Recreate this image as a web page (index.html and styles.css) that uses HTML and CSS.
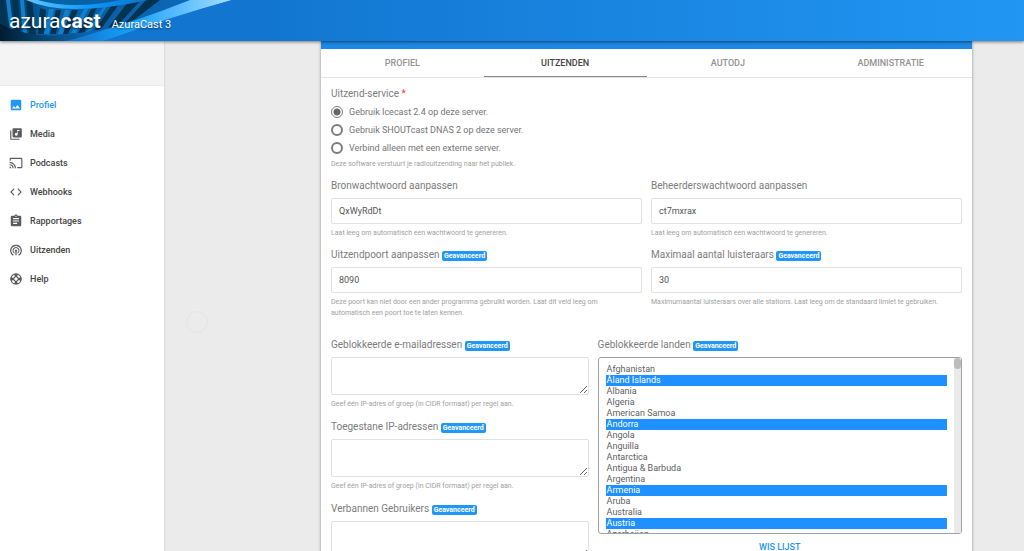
FILE: index.html
```html
<!DOCTYPE html>
<html lang="nl">
<head>
<meta charset="utf-8">
<title>AzuraCast 3</title>
<link rel="stylesheet" href="styles.css">
</head>
<body>
<header class="topbar">
  <svg class="topbar-art" viewBox="0 0 280 41" aria-hidden="true">
    <defs>
      <linearGradient id="base" x1="0" x2="1"><stop offset="0" stop-color="#04304f"/><stop offset=".2" stop-color="#0464a4"/><stop offset=".5" stop-color="#0a5fa6"/><stop offset="1" stop-color="#0f6fc8"/></linearGradient>
      <linearGradient id="low" x1="0" x2="1"><stop offset="0" stop-color="#021c30"/><stop offset=".4" stop-color="#04487a"/><stop offset="1" stop-color="#1276d0"/></linearGradient>
      <linearGradient id="beam" x1="0" x2="1"><stop offset="0" stop-color="#0d6fc4"/><stop offset=".4" stop-color="#18a0fb"/><stop offset="1" stop-color="#a4dcff"/></linearGradient>
      <linearGradient id="ring" x1="0" x2="1"><stop offset="0" stop-color="#63c4ff"/><stop offset=".5" stop-color="#0d9bfb"/><stop offset="1" stop-color="#0a70c4"/></linearGradient>
    </defs>
    <path d="M0 0H232L104 41H0z" fill="url(#base)"/>
    <path d="M0 0H3L8 33H0zM12 0h6l3 35-6-1zM26 0h6l4 35-7 0zM40 8l6 2-2 24-6 0zM56 10l5 0-5 24-6 0zM72 10l6 0-10 24-6 0zM92 8l6-2-14 27-6 0zM112 5l8-2-19 26-7 2zM128 2l12-1-22 24-10 3zM146 0h14l-26 20-9 3z" fill="#033353"/>
    <path d="M6 0h4l4 33-4 0zM20 0h4l3 35-4 0zM49 9h5l-5 25-5 0zM65 10l5 0-7 24-5 0zM84 9l5-1-13 25-5 0zM104 6l4-1-17 26-5 1z" fill="#107fce"/>
    <path d="M0 24Q30 38 60 35T116 27L104 41H0z" fill="url(#low)"/>
    <path d="M26 0Q46 9 76 9T148 0H120Q98 5 76 5T38 0z" fill="url(#ring)"/>
    <path d="M88 35Q140 20 190 0H232Q170 18 104 41H64Q76 39 88 35z" fill="url(#beam)"/>
    <path d="M104 41Q170 17 232 0H280V41z" fill="#1276d0"/>
  </svg>
  <a class="brand" href="#"><span class="logo">azura<strong>cast</strong></span><span class="instance">AzuraCast 3</span></a>
</header>
<div class="layout">
  <aside class="sidebar">
    <div class="sidebar-head"></div>
    <nav class="nav">
      <a class="nav-link active" href="#"><svg viewBox="0 0 24 24"><path d="M21 19V5a2 2 0 0 0-2-2H5a2 2 0 0 0-2 2v14c0 1.100.9 2 2 2h14a2 2 0 0 0 2-2zM8.500 13.500l2.500 3.010L14.500 12l4.500 6H5l3.500-4.500z"/></svg>Profiel</a>
      <a class="nav-link" href="#"><svg viewBox="0 0 24 24"><path d="M20 2H8a2 2 0 0 0-2 2v12c0 1.100.9 2 2 2h12a2 2 0 0 0 2-2V4a2 2 0 0 0-2-2zm-2 5h-3v5.500a2.500 2.500 0 1 1-1-2V5h4v2zM4 6H2v14c0 1.100.9 2 2 2h14v-2H4V6z"/></svg>Media</a>
      <a class="nav-link" href="#"><svg viewBox="0 0 24 24"><path d="M21 3H3a2 2 0 0 0-2 2v3h2V5h18v14h-7v2h7a2 2 0 0 0 2-2V5a2 2 0 0 0-2-2zM1 18v3h3a3 3 0 0 0-3-3zm0-4v2a5 5 0 0 1 5 5h2a7 7 0 0 0-7-7zm0-4v2a9 9 0 0 1 9 9h2A11 11 0 0 0 1 10z"/></svg>Podcasts</a>
      <a class="nav-link" href="#"><svg viewBox="0 0 24 24"><path d="M9.400 16.600L4.800 12l4.600-4.600L8 6l-6 6 6 6 1.400-1.400zm5.200 0l4.600-4.600-4.600-4.600L16 6l6 6-6 6-1.400-1.400z"/></svg>Webhooks</a>
      <a class="nav-link" href="#"><svg viewBox="0 0 24 24"><path d="M19 3h-4.180a3 3 0 0 0-5.640 0H5a2 2 0 0 0-2 2v14c0 1.100.9 2 2 2h14a2 2 0 0 0 2-2V5a2 2 0 0 0-2-2zm-7 0a1 1 0 1 1 0 2 1 1 0 0 1 0-2zm2 14H7v-2h7v2zm3-4H7v-2h10v2zm0-4H7V7h10v2z"/></svg>Rapportages</a>
      <a class="nav-link" href="#"><svg viewBox="0 0 24 24"><path d="M12 11a2 2 0 0 0-1 3.700V21h2v-6.300A2 2 0 0 0 12 11zm6 2a6 6 0 1 0-9 5.200l1-1.700a4 4 0 1 1 4 0l1 1.700a6 6 0 0 0 3-5.200zM12 3A10 10 0 0 0 7 21.700l1-1.800a8 8 0 1 1 8 0l1 1.800A10 10 0 0 0 12 3z"/></svg>Uitzenden</a>
      <a class="nav-link" href="#"><svg viewBox="0 0 24 24"><path fill-rule="evenodd" d="M12 2a10 10 0 1 0 0 20 10 10 0 0 0 0-20zm7.460 7.120l-2.780 1.150a5 5 0 0 0-2.950-2.940l1.150-2.780a8 8 0 0 1 4.580 4.570zM12 15a3 3 0 1 1 0-6 3 3 0 0 1 0 6zM9.130 4.540l1.170 2.780a5 5 0 0 0-2.980 2.970L4.540 9.130a8 8 0 0 1 4.590-4.590zM4.540 14.870l2.780-1.150a5 5 0 0 0 2.970 2.960l-1.170 2.780a8 8 0 0 1-4.580-4.590zm10.340 4.590l-1.150-2.780a5 5 0 0 0 2.950-2.970l2.780 1.170a8 8 0 0 1-4.580 4.580z"/></svg>Help</a>
    </nav>
  </aside>
  <main class="main">
    <div class="ripple"></div>
    <section class="card">
      <div class="card-head"></div>
      <nav class="tabs">
        <a class="tab" href="#">PROFIEL</a><a class="tab current" href="#">UITZENDEN</a><a class="tab" href="#">AUTODJ</a><a class="tab" href="#">ADMINISTRATIE</a>
      </nav>
      <form class="form">
        <fieldset class="service">
          <legend class="label">Uitzend-service <span class="required">*</span></legend>
          <label class="choice"><input type="radio" name="service" checked>Gebruik Icecast 2.4 op deze server.</label>
          <label class="choice"><input type="radio" name="service">Gebruik SHOUTcast DNAS 2 op deze server.</label>
          <label class="choice"><input type="radio" name="service">Verbind alleen met een externe server.</label>
          <p class="help">Deze software verstuurt je radiouitzending naar het publiek.</p>
        </fieldset>
        <div class="halves">
          <div class="field">
            <label class="label" for="source">Bronwachtwoord aanpassen</label>
            <input class="control" id="source" type="text" value="QxWyRdDt">
            <p class="help">Laat leeg om automatisch een wachtwoord te genereren.</p>
          </div>
          <div class="field">
            <label class="label" for="admin">Beheerderswachtwoord aanpassen</label>
            <input class="control" id="admin" type="text" value="ct7mxrax">
            <p class="help">Laat leeg om automatisch een wachtwoord te genereren.</p>
          </div>
          <div class="field">
            <label class="label" for="port">Uitzendpoort aanpassen <span class="badge">Geavanceerd</span></label>
            <input class="control" id="port" type="text" value="8090">
            <p class="help">Deze poort kan niet door een ander programma gebruikt worden. Laat dit veld leeg om automatisch een poort toe te laten kennen.</p>
          </div>
          <div class="field">
            <label class="label" for="max">Maximaal aantal luisteraars <span class="badge">Geavanceerd</span></label>
            <input class="control" id="max" type="text" value="30">
            <p class="help">Maximumaantal luisteraars over alle stations. Laat leeg om de standaard limiet te gebruiken.</p>
          </div>
        </div>
        <div class="blocking">
          <div class="stack">
            <div class="field">
              <label class="label" for="mails">Geblokkeerde e-mailadressen <span class="badge">Geavanceerd</span></label>
              <textarea class="control area" id="mails"></textarea>
              <p class="help">Geef één IP-adres of groep (in CIDR formaat) per regel aan.</p>
            </div>
            <div class="field">
              <label class="label" for="ips">Toegestane IP-adressen <span class="badge">Geavanceerd</span></label>
              <textarea class="control area" id="ips"></textarea>
              <p class="help">Geef één IP-adres of groep (in CIDR formaat) per regel aan.</p>
            </div>
            <div class="field">
              <label class="label" for="agents">Verbannen Gebruikers <span class="badge">Geavanceerd</span></label>
              <textarea class="control area" id="agents"></textarea>
            </div>
          </div>
          <div class="countries">
            <label class="label" for="lands">Geblokkeerde landen <span class="badge">Geavanceerd</span></label>
            <div class="list-box">
              <select class="list" id="lands" multiple>
                <option>Afghanistan</option><option selected>Åland Islands</option><option>Albania</option><option>Algeria</option><option>American Samoa</option><option selected>Andorra</option><option>Angola</option><option>Anguilla</option><option>Antarctica</option><option>Antigua &amp; Barbuda</option><option>Argentina</option><option selected>Armenia</option><option>Aruba</option><option>Australia</option><option selected>Austria</option><option>Azerbaijan</option><option>Bahamas</option><option>Bahrain</option><option>Bangladesh</option><option>Barbados</option>
              </select>
              <span class="scroll-track"><span class="scroll-thumb"></span></span>
            </div>
            <button class="clear" type="button">WIS LIJST</button>
          </div>
        </div>
      </form>
    </section>
  </main>
</div>
</body>
</html>
```
FILE: styles.css
```css
* { box-sizing: border-box; }
html, body { height: 100%; }
body {
  margin: 0;
  display: flex;
  flex-direction: column;
  overflow: hidden;
  background: #ebebeb;
  color: #747474;
  font: 9px/12px Roboto, sans-serif;
}
a { color: inherit; text-decoration: none; }

.topbar {
  position: relative;
  z-index: 2;
  flex: none;
  height: 41px;
  background: linear-gradient(90deg, #1276d0 25%, #2196f3);
  box-shadow: 0 1px 3px rgba(0, 0, 0, .5);
}
.topbar-art { position: absolute; left: 0; top: 0; height: 100%; }
.brand {
  position: relative;
  display: flex;
  align-items: baseline;
  gap: 11px;
  padding: 11px 9px;
  color: #fff;
  text-shadow: 0 1px 2px rgba(0, 0, 0, .5);
}
.logo { font-size: 21px; line-height: 20px; }
.logo strong { font-weight: 700; }
.instance { font-size: 11px; }

.layout { flex: 1; min-height: 0; display: flex; }
.sidebar {
  flex: none;
  width: 164px;
  background: #fff;
  box-shadow: 0 0 2px rgba(0, 0, 0, .2);
}
.sidebar-head { height: 45px; background: #f4f4f4; border-bottom: 1px solid #ebebeb; }
.nav { padding-top: 4px; }
.nav-link {
  display: flex;
  align-items: center;
  gap: 7px;
  height: 29px;
  padding-left: 9px;
  color: #444;
  font-weight: 500;
}
.nav-link svg { width: 14px; height: 14px; fill: #5b5b5b; }
.nav-link.active { color: #2196f3; }
.nav-link.active svg { fill: #2196f3; }

.main { position: relative; flex: 1; min-width: 0; padding: 0 52px 0 157px; }
.ripple {
  position: absolute;
  left: 22px;
  top: 270px;
  width: 22px;
  height: 22px;
  border: 1px solid #e4e4e4;
  border-radius: 50%;
}
.card { min-height: 100%; background: #fff; box-shadow: 0 0 3px rgba(0, 0, 0, .4); }
.card-head { height: 8px; background: #1e88e5; }
.tabs { display: grid; grid-template-columns: repeat(4, 1fr); border-bottom: 1px solid #e4e4e4; }
.tab {
  padding: 8px 0 7px;
  border-bottom: 1px solid transparent;
  color: #929292;
  text-align: center;
  font-weight: 500;
}
.tab.current { color: #444; border-color: #888; }

.form { padding: 9px 10px; }
.service { margin: 0 0 9px; padding: 0; border: 0; }
.service .label { margin-bottom: 2px; }
.service .help { margin-top: 2px; }
.label {
  display: block;
  padding: 0;
  color: #7c7c7c;
  font-size: 10px;
  line-height: 14px;
}
.required { color: #f44336; }
.choice { display: flex; align-items: center; gap: 6px; height: 18px; }
.choice input {
  appearance: none;
  width: 12px;
  height: 12px;
  margin: 0;
  border: 2px solid #7c7c7c;
  border-radius: 50%;
}
.choice input:checked { border-width: 1px; background: radial-gradient(circle, #666 3px, transparent 4px); }
.help { margin: 0; padding-right: 8px; color: #a0a0a0; font-size: 7px; line-height: 11px; }
.halves { display: grid; grid-template-columns: 1fr 1fr; gap: 9px; }
.control {
  display: block;
  width: 100%;
  height: 26px;
  margin: 5px 0 4px;
  padding: 0 7px;
  border: 1px solid #dfe1e4;
  border-radius: 2px;
  background: #fff;
  color: #555;
  font: 9px Roboto, sans-serif;
}
.area { height: 38px; }
.badge {
  display: inline-block;
  padding: 0 2px;
  border-radius: 2px;
  background: #2196f3;
  color: #fff;
  font-size: 7px;
  font-weight: 700;
  line-height: 10px;
}
.blocking { display: grid; grid-template-columns: 258fr 365fr; gap: 9px; margin-top: 19px; }
.stack { display: grid; gap: 10px; }
.list-box { position: relative; margin: 5px 0 7px; }
.list {
  display: block;
  width: 100%;
  height: 177px;
  padding: 6px 14px 0 7px;
  border: 1px solid #a0a0a0;
  border-radius: 3px;
  background: #fff;
  color: #606060;
  font: 9px Roboto, sans-serif;
  overflow: hidden;
}
.list option { min-height: 11px; padding: 0 1px; line-height: 11px; }
.list option:checked { background: #1e90ff linear-gradient(#1e90ff, #1e90ff); color: #fff; }
.scroll-track {
  position: absolute;
  top: 1px;
  right: 1px;
  bottom: 1px;
  width: 7px;
  background: #eaeaea;
}
.scroll-thumb { display: block; height: 11px; border-radius: 4px; background: #bdbdbd; }
.clear {
  display: block;
  width: 100%;
  padding: 0;
  border: 0;
  background: none;
  color: #2196f3;
  font: 500 9px/12px Roboto, sans-serif;
}
```
